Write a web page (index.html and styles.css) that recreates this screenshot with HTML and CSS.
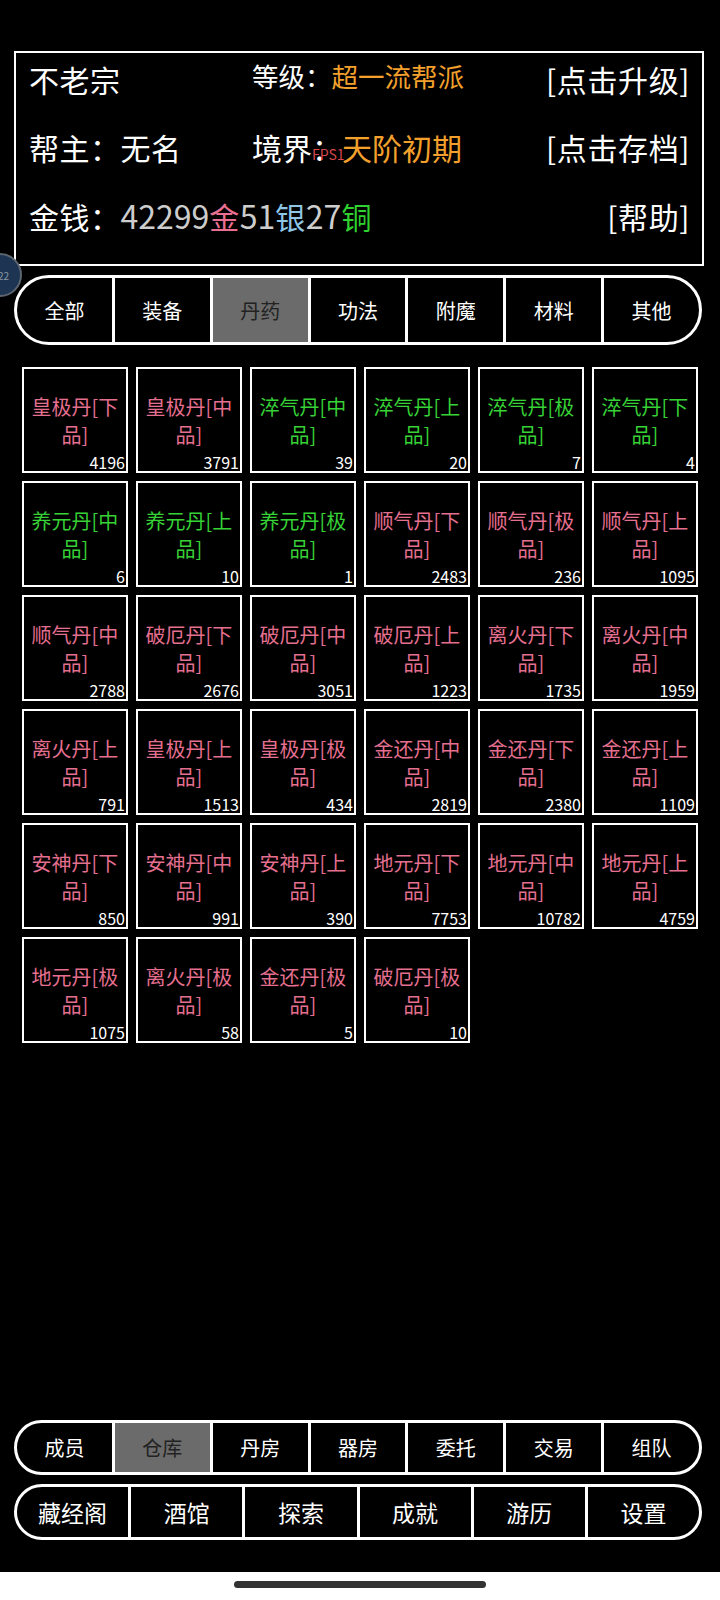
FILE: index.html
```html
<!DOCTYPE html>
<html lang="zh-CN">

<head>
	<meta charset="UTF-8">
	<meta name="viewport" content="width=device-width, initial-scale=1.0">
	<title>帮派仓库</title>
	<link rel="stylesheet" href="styles.css">
</head>

<body>
	<div class="bubble"><span>22</span></div>

	<section class="info">
		<div class="info-row">
			<span class="name">不老宗</span>
			<span class="level">等级：<em class="gold">超一流帮派</em></span>
			<span class="act">[点击升级]</span>
		</div>
		<div class="info-row">
			<span class="name">帮主：无名</span>
			<span class="realm">境界：<em class="gold">天阶初期</em></span>
			<span class="act">[点击存档]</span>
		</div>
		<div class="info-row">
			<span class="name">金钱：<b class="num">42299</b><b class="c-gold">金</b><b class="num">51</b><b class="c-silver">银</b><b class="num">27</b><b class="c-copper">铜</b></span>
			<span></span>
			<span class="act">[帮助]</span>
		</div>
		<span class="fps">FPS1</span>
	</section>

	<nav class="bar tabs">
		<a>全部</a>
		<a>装备</a>
		<a class="on">丹药</a>
		<a>功法</a>
		<a>附魔</a>
		<a>材料</a>
		<a>其他</a>
	</nav>

	<main class="grid">
		<div class="item pink"><p>皇极丹[下品]</p><span>4196</span></div>
		<div class="item pink"><p>皇极丹[中品]</p><span>3791</span></div>
		<div class="item green"><p>淬气丹[中品]</p><span>39</span></div>
		<div class="item green"><p>淬气丹[上品]</p><span>20</span></div>
		<div class="item green"><p>淬气丹[极品]</p><span>7</span></div>
		<div class="item green"><p>淬气丹[下品]</p><span>4</span></div>

		<div class="item green"><p>养元丹[中品]</p><span>6</span></div>
		<div class="item green"><p>养元丹[上品]</p><span>10</span></div>
		<div class="item green"><p>养元丹[极品]</p><span>1</span></div>
		<div class="item pink"><p>顺气丹[下品]</p><span>2483</span></div>
		<div class="item pink"><p>顺气丹[极品]</p><span>236</span></div>
		<div class="item pink"><p>顺气丹[上品]</p><span>1095</span></div>

		<div class="item pink"><p>顺气丹[中品]</p><span>2788</span></div>
		<div class="item pink"><p>破厄丹[下品]</p><span>2676</span></div>
		<div class="item pink"><p>破厄丹[中品]</p><span>3051</span></div>
		<div class="item pink"><p>破厄丹[上品]</p><span>1223</span></div>
		<div class="item pink"><p>离火丹[下品]</p><span>1735</span></div>
		<div class="item pink"><p>离火丹[中品]</p><span>1959</span></div>

		<div class="item pink"><p>离火丹[上品]</p><span>791</span></div>
		<div class="item pink"><p>皇极丹[上品]</p><span>1513</span></div>
		<div class="item pink"><p>皇极丹[极品]</p><span>434</span></div>
		<div class="item pink"><p>金还丹[中品]</p><span>2819</span></div>
		<div class="item pink"><p>金还丹[下品]</p><span>2380</span></div>
		<div class="item pink"><p>金还丹[上品]</p><span>1109</span></div>

		<div class="item pink"><p>安神丹[下品]</p><span>850</span></div>
		<div class="item pink"><p>安神丹[中品]</p><span>991</span></div>
		<div class="item pink"><p>安神丹[上品]</p><span>390</span></div>
		<div class="item pink"><p>地元丹[下品]</p><span>7753</span></div>
		<div class="item pink"><p>地元丹[中品]</p><span>10782</span></div>
		<div class="item pink"><p>地元丹[上品]</p><span>4759</span></div>

		<div class="item pink"><p>地元丹[极品]</p><span>1075</span></div>
		<div class="item pink"><p>离火丹[极品]</p><span>58</span></div>
		<div class="item pink"><p>金还丹[极品]</p><span>5</span></div>
		<div class="item pink"><p>破厄丹[极品]</p><span>10</span></div>
	</main>

	<footer>
		<nav class="bar menu">
			<a>成员</a>
			<a class="on">仓库</a>
			<a>丹房</a>
			<a>器房</a>
			<a>委托</a>
			<a>交易</a>
			<a>组队</a>
		</nav>
		<nav class="bar menu big">
			<a>藏经阁</a>
			<a>酒馆</a>
			<a>探索</a>
			<a>成就</a>
			<a>游历</a>
			<a>设置</a>
		</nav>
		<div class="sysbar"><i></i></div>
	</footer>
</body>

</html>
```

FILE: styles.css
```css
* {
	margin: 0;
	padding: 0;
	box-sizing: border-box;
}

html,
body {
	width: 100%;
	background: #000;
}

body {
	display: flex;
	flex-direction: column;
	height: 1600px;
	overflow: hidden;
	position: relative;
	color: #fff;
	font-family: "Noto Sans CJK SC", "Noto Sans", sans-serif;
}

em,
b {
	font-style: normal;
	font-weight: normal;
}

/* top info box */
.info {
	position: relative;
	margin: 51px 16px 0 14px;
	height: 215px;
	border: 2px solid #fff;
	padding: 4px 12px 0 13px;
}

.info-row {
	display: grid;
	grid-template-columns: 223px 1fr auto;
	align-items: center;
	height: 44px;
	margin-bottom: 24px;
	font-size: 30px;
	line-height: 44px;
	white-space: nowrap;
}

.info-row .name {
	letter-spacing: 0.5px;
}

.info-row .act {
	letter-spacing: 0.6px;
}

.info-row .level {
	font-size: 26.5px;
	position: relative;
	top: -3px;
}

.gold {
	color: #f3a02c;
}

.num {
	color: #cdcdcd;
	font-size: 32px;
	letter-spacing: 0;
}

.c-gold {
	color: #e96f91;
}

.c-silver {
	color: #8fc6e6;
}

.c-copper {
	color: #2fd22f;
}

.fps {
	position: absolute;
	left: 296px;
	top: 93px;
	font-size: 14px;
	line-height: 16px;
	color: #d9474d;
}

.bubble {
	position: absolute;
	left: -22px;
	top: 253px;
	width: 44px;
	height: 44px;
	border-radius: 50%;
	background: #1d3552;
	border: 2px solid #5d6670;
	display: flex;
	align-items: center;
	justify-content: flex-end;
	padding-right: 11px;
	font-size: 10px;
	color: #8a95a2;
	z-index: 2;
}

/* segmented bars */
.bar {
	display: flex;
	border: 3px solid #fff;
	overflow: hidden;
	margin: 0 18px 0 14px;
}

.bar a {
	flex: 1 1 0;
	display: flex;
	align-items: center;
	justify-content: center;
	border-left: 3px solid #fff;
	font-size: 20px;
	color: #fff;
}

.bar a:first-child {
	border-left: none;
}

.bar a.on {
	background: #6b6b6b;
	color: #222;
}

.tabs {
	margin-top: 9px;
	height: 70px;
	border-radius: 35px;
}

/* item grid */
.grid {
	display: grid;
	grid-template-columns: repeat(6, 106px);
	grid-auto-rows: 106px;
	gap: 8px;
	margin-top: 22px;
	padding-left: 22px;
}

.item {
	position: relative;
	border: 2px solid #fff;
	display: flex;
	align-items: center;
	justify-content: center;
}

.item p {
	text-align: center;
	font-size: 20px;
	line-height: 28px;
	padding-top: 1px;
}

.item span {
	position: absolute;
	right: 1px;
	bottom: 1px;
	font-size: 16px;
	line-height: 16px;
	color: #fff;
}

.pink {
	color: #e56f8f;
}

.green {
	color: #36d236;
}

/* bottom menus */
footer {
	margin-top: auto;
}

.menu {
	height: 55px;
	border-radius: 28px;
}

.menu.big {
	margin-top: 9px;
	height: 56px;
}

.menu.big a {
	font-size: 23px;
}

.sysbar {
	margin-top: 32px;
	height: 28px;
	background: #fff;
	display: flex;
	justify-content: center;
	padding-top: 9px;
}

.sysbar i {
	display: block;
	width: 252px;
	height: 7px;
	border-radius: 4px;
	background: #333;
}
```
